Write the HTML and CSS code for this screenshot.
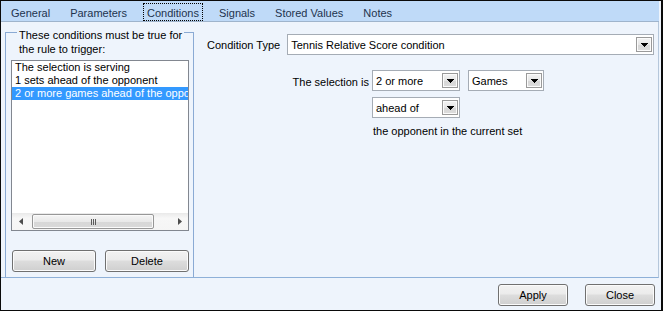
FILE: index.html
```html
<!DOCTYPE html>
<html>
<head>
<meta charset="utf-8">
<title>Conditions</title>
<link rel="stylesheet" href="styles.css">
</head>
<body>
<div class="window">
  <div class="tabs">
    <div class="tab">General</div>
    <div class="tab">Parameters</div>
    <div class="tab active">Conditions</div>
    <div class="tab">Signals</div>
    <div class="tab">Stored Values</div>
    <div class="tab">Notes</div>
  </div>
  <div class="panel">
    <div class="group">
      <div class="legend-row"><span class="legend">These conditions must be true for<br>the rule to trigger:</span></div>
      <div class="listbox">
        <div class="items">
          <div class="item">The selection is serving</div>
          <div class="item">1 sets ahead of the opponent</div>
          <div class="item selected">2 or more games ahead of the opponent</div>
        </div>
        <div class="hscroll">
          <div class="sb-arrow"><svg width="4" height="7" viewBox="0 0 4 7"><polygon points="4,0 4,7 0,3.5" fill="#4d4d4d"/></svg></div>
          <div class="sb-track">
            <div class="sb-thumb"><svg width="5" height="6" viewBox="0 0 5 6"><rect x="0" y="0" width="1" height="6" fill="#5a5a5a"/><rect x="2" y="0" width="1" height="6" fill="#5a5a5a"/><rect x="4" y="0" width="1" height="6" fill="#5a5a5a"/></svg></div>
          </div>
          <div class="sb-arrow"><svg width="4" height="7" viewBox="0 0 4 7"><polygon points="0,0 0,7 4,3.5" fill="#4d4d4d"/></svg></div>
        </div>
      </div>
      <div class="group-buttons">
        <button class="btn wide">New</button>
        <button class="btn wide">Delete</button>
      </div>
    </div>
    <div class="details">
      <div class="type-row">
        <span class="label">Condition Type</span>
        <div class="combo grow">
          <span class="combo-text">Tennis Relative Score condition</span>
          <span class="combo-btn"><svg width="7" height="4" viewBox="0 0 7 4" shape-rendering="crispEdges"><rect x="0" y="0" width="7" height="1" fill="#000"/><rect x="1" y="1" width="5" height="1" fill="#000"/><rect x="2" y="2" width="3" height="1" fill="#000"/><rect x="3" y="3" width="1" height="1" fill="#000"/></svg></span>
        </div>
      </div>
      <div class="rule-grid">
        <span class="label right">The selection is</span>
        <div class="combo-pair">
          <div class="combo w88">
            <span class="combo-text">2 or more</span>
            <span class="combo-btn"><svg width="7" height="4" viewBox="0 0 7 4" shape-rendering="crispEdges"><rect x="0" y="0" width="7" height="1" fill="#000"/><rect x="1" y="1" width="5" height="1" fill="#000"/><rect x="2" y="2" width="3" height="1" fill="#000"/><rect x="3" y="3" width="1" height="1" fill="#000"/></svg></span>
          </div>
          <div class="combo w76">
            <span class="combo-text">Games</span>
            <span class="combo-btn"><svg width="7" height="4" viewBox="0 0 7 4" shape-rendering="crispEdges"><rect x="0" y="0" width="7" height="1" fill="#000"/><rect x="1" y="1" width="5" height="1" fill="#000"/><rect x="2" y="2" width="3" height="1" fill="#000"/><rect x="3" y="3" width="1" height="1" fill="#000"/></svg></span>
          </div>
        </div>
        <span></span>
        <div class="combo w88">
          <span class="combo-text">ahead of</span>
          <span class="combo-btn"><svg width="7" height="4" viewBox="0 0 7 4" shape-rendering="crispEdges"><rect x="0" y="0" width="7" height="1" fill="#000"/><rect x="1" y="1" width="5" height="1" fill="#000"/><rect x="2" y="2" width="3" height="1" fill="#000"/><rect x="3" y="3" width="1" height="1" fill="#000"/></svg></span>
        </div>
        <span></span>
        <span class="note">the opponent in the current set</span>
      </div>
    </div>
  </div>
  <div class="footer">
    <button class="btn narrow">Apply</button>
    <button class="btn narrow">Close</button>
  </div>
</div>
</body>
</html>
```

FILE: styles.css
```css
* { box-sizing: border-box; }
html, body { margin: 0; padding: 0; }
body {
  font-family: "Liberation Sans", Arial, sans-serif;
  font-size: 11px;
  color: #000;
  background: #fff;
}
.window {
  width: 663px;
  height: 311px;
  border: 1px solid #0a0a0a;
  border-right-width: 2px;
  background: #eef4fc;
  display: flex;
  flex-direction: column;
}
.tabs {
  flex: none;
  height: 21px;
  margin-right: 2px;
  background: #bfdaf8;
  border-bottom: 1px solid #9fb4cc;
  display: flex;
  align-items: flex-start;
  padding: 2px 0 0 0;
}
.tab {
  margin: 0 6px;
  padding: 2px 3px 0;
  border: 1px solid transparent;
  line-height: 14px;
  color: #22334e;
  white-space: nowrap;
}
.tab.active { border: 1px dotted #000; }

.panel {
  flex: none;
  height: 256px;
  margin-right: 2px;
  border-right: 1px solid #b5c7db;
  border-bottom: 1px solid #8eb0d8;
  display: flex;
  padding: 10px 0 0 4px;
}
.group {
  flex: none;
  width: 189px;
  border: 1px solid #8aaad4;
  border-bottom: none;
  display: flex;
  flex-direction: column;
}
.legend-row { margin-top: -5px; }
.legend {
  display: inline-block;
  margin-left: 11px;
  padding: 0 2px;
  background: #eef4fc;
  line-height: 14px;
}
.listbox {
  margin: 4px 0 0 5px;
  width: 178px;
  height: 171px;
  border: 1px solid #828790;
  background: #fff;
  display: flex;
  flex-direction: column;
}
.items {
  flex: 1;
  overflow: hidden;
}
.item {
  height: 13px;
  line-height: 13px;
  padding-left: 3px;
  white-space: nowrap;
  overflow: hidden;
}
.item:first-child { margin-top: 0; }
.item.selected { background: #3399ff; color: #fff; }
.hscroll {
  flex: none;
  height: 17px;
  display: flex;
  background: linear-gradient(#e9e9e9, #f7f7f7 30%, #f5f5f5);
}
.sb-arrow {
  flex: none;
  width: 17px;
  display: flex;
  align-items: center;
  justify-content: center;
}
.sb-track { flex: 1; display: flex; align-items: center; }
.sb-thumb {
  margin-left: 3px;
  width: 122px;
  height: 15px;
  border: 1px solid #979797;
  border-radius: 2px;
  background: linear-gradient(#f4f4f4, #e9e9e9 50%, #d7d7d7 51%, #d9d9d9);
  box-shadow: inset 0 0 0 1px #fafafa;
  display: flex;
  align-items: center;
  justify-content: center;
}
.group-buttons {
  margin: 19px 0 0 6px;
  display: flex;
  gap: 9px;
}
.btn {
  height: 22px;
  padding: 0;
  font-family: "Liberation Sans", Arial, sans-serif;
  font-size: 11px;
  color: #000;
  border: 1px solid #707070;
  border-radius: 3px;
  background: linear-gradient(#f2f2f2, #ebebeb 45%, #dddddd 50%, #cfcfcf);
  box-shadow: inset 0 0 0 1px #fbfbfb;
}
.btn.wide { width: 84px; }
.btn.narrow { width: 70px; }

.details {
  flex: 1;
  padding: 2px 4px 0 13px;
}
.type-row {
  display: flex;
  align-items: center;
  gap: 7px;
}
.label { line-height: 14px; white-space: nowrap; }
.combo {
  height: 21px;
  border: 1px solid #a5acb5;
  background: #fff;
  display: flex;
  align-items: center;
  padding: 0 1px 0 3px;
}
.combo.grow { flex: 1; }
.combo.w88 { width: 88px; }
.combo.w76 { width: 76px; }
.combo-text { flex: 1; line-height: 14px; white-space: nowrap; }
.combo-btn {
  flex: none;
  width: 16px;
  height: 15px;
  border: 1px solid #9a9a9a;
  background: linear-gradient(#f3f3f3, #e6e6e6 50%, #d6d6d6 51%, #dcdcdc);
  box-shadow: inset 0 0 0 1px #fbfbfb;
  display: flex;
  align-items: center;
  justify-content: center;
}
.rule-grid {
  margin-top: 15px;
  display: grid;
  grid-template-columns: 165px auto;
  row-gap: 6px;
  justify-content: start;
}
.label.right {
  text-align: right;
  padding-right: 3px;
  align-self: center;
  padding-top: 2px;
}
.combo-pair { display: flex; gap: 8px; }
.note { padding-left: 1px; line-height: 14px; }

.footer {
  flex: 1;
  display: flex;
  justify-content: flex-end;
  align-items: flex-start;
  gap: 17px;
  padding: 6px 6px 0 0;
}
```
